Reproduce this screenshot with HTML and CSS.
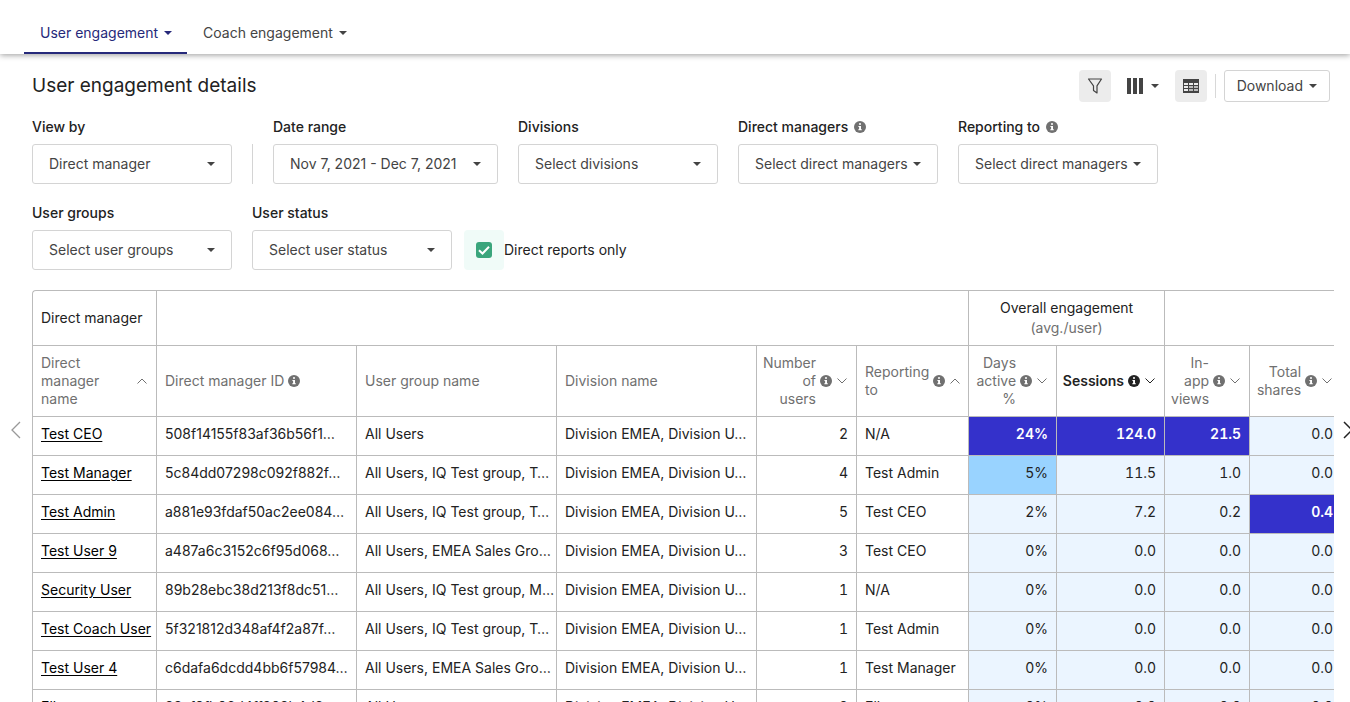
FILE: index.html
```html
<!DOCTYPE html>
<html lang="en">
<head>
<meta charset="utf-8">
<title>User engagement details</title>
<link rel="stylesheet" href="styles.css">
</head>
<body>
<svg class="defs" aria-hidden="true">
  <symbol id="caret" viewBox="0 0 8 4"><path d="M0 0h8L4 4z" fill="currentColor"/></symbol>
  <symbol id="info" viewBox="0 0 12 12"><circle cx="6" cy="6" r="6" fill="currentColor"/><path d="M5 2.2h2v1.6H5zM4.4 5H7v3.2h.8v1H4.3v-1h.8V6h-.7z" fill="#fff"/></symbol>
  <symbol id="up" viewBox="0 0 10 6"><path d="M.5 5.5 5 1l4.500 4.500" fill="none" stroke="currentColor"/></symbol>
  <symbol id="down" viewBox="0 0 10 6"><path d="M.5.5 5 5 9.500.5" fill="none" stroke="currentColor"/></symbol>
</svg>
<nav class="tabs">
  <button class="tab tab-active">User engagement <svg class="caret"><use href="#caret"/></svg></button>
  <button class="tab">Coach engagement <svg class="caret"><use href="#caret"/></svg></button>
</nav>
<main>
  <header class="title-bar">
    <h1>User engagement details</h1>
    <div class="tools">
      <button class="icon-btn icon-on" aria-label="Filters"><svg width="16" height="16" viewBox="0 0 16 16"><path d="M1.500 1h13L10 7.800V15L6.500 12.500V7.800z" fill="none" stroke="currentColor" stroke-width="1.200" stroke-linejoin="round"/></svg></button>
      <button class="icon-btn columns" aria-label="Columns"><svg width="16" height="16" viewBox="0 0 16 16"><path d="M0 0h4v16H0zM6 0h4v16H6zM12 0h4v16h-4z" fill="currentColor"/></svg><svg class="caret"><use href="#caret"/></svg></button>
      <button class="icon-btn icon-on" aria-label="Table"><svg width="16" height="14" viewBox="0 0 16 14"><path d="M0 0h16v14H0z" fill="currentColor"/><path d="M1 4h4v2H1zM6 4h4v2H6zM11 4h4v2h-4zM1 7h4v2H1zM1 10h4v2H1z" fill="#ececec"/><path d="M6 7h4v2H6zM11 7h4v2h-4zM6 10h4v2H6zM11 10h4v2h-4z" fill="#bbb"/></svg></button>
      <span class="tool-rule"></span>
      <button class="download">Download <svg class="caret"><use href="#caret"/></svg></button>
    </div>
  </header>
  <form class="filters">
    <div class="filter">
      <label for="view">View by</label>
      <div class="select"><select id="view"><option>Direct manager</option></select><svg class="caret"><use href="#caret"/></svg></div>
    </div>
    <span class="filter-rule"></span>
    <div class="filter filter-date">
      <label for="dates">Date range</label>
      <div class="select"><select id="dates"><option>Nov 7, 2021 - Dec 7, 2021</option></select><svg class="caret"><use href="#caret"/></svg></div>
    </div>
    <div class="filter">
      <label for="divisions">Divisions</label>
      <div class="select"><select id="divisions"><option>Select divisions</option></select><svg class="caret"><use href="#caret"/></svg></div>
    </div>
    <div class="filter">
      <label for="managers">Direct managers <svg class="info"><use href="#info"/></svg></label>
      <div class="select"><select id="managers"><option>Select direct managers</option></select><svg class="caret"><use href="#caret"/></svg></div>
    </div>
    <div class="filter">
      <label for="reporting">Reporting to <svg class="info"><use href="#info"/></svg></label>
      <div class="select"><select id="reporting"><option>Select direct managers</option></select><svg class="caret"><use href="#caret"/></svg></div>
    </div>
  </form>
  <form class="filters">
    <div class="filter">
      <label for="groups">User groups</label>
      <div class="select"><select id="groups"><option>Select user groups</option></select><svg class="caret"><use href="#caret"/></svg></div>
    </div>
    <div class="filter">
      <label for="status">User status</label>
      <div class="select"><select id="status"><option>Select user status</option></select><svg class="caret"><use href="#caret"/></svg></div>
    </div>
    <label class="check"><span class="check-box"><input type="checkbox" checked><svg viewBox="0 0 16 16"><path d="M3 8.200 6.500 11.500 13 4.800" fill="none" stroke="#fff" stroke-width="2"/></svg></span>Direct reports only</label>
  </form>
  <section class="report">
    <button class="pager pager-prev" aria-label="Previous columns"><svg width="10" height="18" viewBox="0 0 10 18"><path d="M9 1 1 9l8 8" fill="none" stroke="currentColor" stroke-width="1.300"/></svg></button>
    <div class="table-view">
      <table>
        <colgroup><col class="c-name"><col class="c-text"><col class="c-text"><col class="c-text"><col class="c-users"><col class="c-reporting"><col class="c-days"><col class="c-sessions"><col class="c-views"><col class="c-shares"><col class="c-sessions"></colgroup>
        <thead>
          <tr class="group-row"><th>Direct manager</th><th colspan="5"></th><th colspan="2" class="center">Overall engagement<small>(avg./user)</small></th><th colspan="3"></th></tr>
          <tr class="head-row">
            <th><div class="head head-spread">Direct manager name <svg class="sort"><use href="#up"/></svg></div></th>
            <th><div class="head">Direct manager ID <svg class="info"><use href="#info"/></svg></div></th>
            <th>User group name</th>
            <th>Division name</th>
            <th><div class="head head-num">Number of users <svg class="info"><use href="#info"/></svg><svg class="sort"><use href="#down"/></svg></div></th>
            <th><div class="head">Reporting to <svg class="info"><use href="#info"/></svg><svg class="sort"><use href="#up"/></svg></div></th>
            <th><div class="head head-num">Days active % <svg class="info"><use href="#info"/></svg><svg class="sort"><use href="#down"/></svg></div></th>
            <th class="sorted"><div class="head head-num">Sessions <svg class="info"><use href="#info"/></svg><svg class="sort"><use href="#down"/></svg></div></th>
            <th><div class="head head-num">In-app views <svg class="info"><use href="#info"/></svg><svg class="sort"><use href="#down"/></svg></div></th>
            <th><div class="head head-num">Total shares <svg class="info"><use href="#info"/></svg><svg class="sort"><use href="#down"/></svg></div></th>
            <th></th>
          </tr>
        </thead>
        <tbody>
          <tr><td><a href="#">Test CEO</a></td><td>508f14155f83af36b56f1…</td><td>All Users</td><td>Division EMEA, Division U…</td><td class="num">2</td><td>N/A</td><td class="num high">24%</td><td class="num high">124.0</td><td class="num high">21.5</td><td class="num low">0.0</td><td class="low"></td></tr>
          <tr><td><a href="#">Test Manager</a></td><td>5c84dd07298c092f882f…</td><td>All Users, IQ Test group, T…</td><td>Division EMEA, Division U…</td><td class="num">4</td><td>Test Admin</td><td class="num mid">5%</td><td class="num low">11.5</td><td class="num low">1.0</td><td class="num low">0.0</td><td class="low"></td></tr>
          <tr><td><a href="#">Test Admin</a></td><td>a881e93fdaf50ac2ee084…</td><td>All Users, IQ Test group, T…</td><td>Division EMEA, Division U…</td><td class="num">5</td><td>Test CEO</td><td class="num low">2%</td><td class="num low">7.2</td><td class="num low">0.2</td><td class="num high">0.4</td><td class="low"></td></tr>
          <tr><td><a href="#">Test User 9</a></td><td>a487a6c3152c6f95d068…</td><td>All Users, EMEA Sales Gro…</td><td>Division EMEA, Division U…</td><td class="num">3</td><td>Test CEO</td><td class="num low">0%</td><td class="num low">0.0</td><td class="num low">0.0</td><td class="num low">0.0</td><td class="low"></td></tr>
          <tr><td><a href="#">Security User</a></td><td>89b28ebc38d213f8dc51…</td><td>All Users, IQ Test group, M…</td><td>Division EMEA, Division U…</td><td class="num">1</td><td>N/A</td><td class="num low">0%</td><td class="num low">0.0</td><td class="num low">0.0</td><td class="num low">0.0</td><td class="low"></td></tr>
          <tr><td><a href="#">Test Coach User</a></td><td>5f321812d348af4f2a87f…</td><td>All Users, IQ Test group, T…</td><td>Division EMEA, Division U…</td><td class="num">1</td><td>Test Admin</td><td class="num low">0%</td><td class="num low">0.0</td><td class="num low">0.0</td><td class="num low">0.0</td><td class="low"></td></tr>
          <tr><td><a href="#">Test User 4</a></td><td>c6dafa6dcdd4bb6f57984…</td><td>All Users, EMEA Sales Gro…</td><td>Division EMEA, Division U…</td><td class="num">1</td><td>Test Manager</td><td class="num low">0%</td><td class="num low">0.0</td><td class="num low">0.0</td><td class="num low">0.0</td><td class="low"></td></tr>
          <tr><td><a href="#">Ella</a></td><td>23af9fb06d4ff202b4d8…</td><td>All Users</td><td>Division EMEA, Division U…</td><td class="num">2</td><td>Ella</td><td class="num low">0%</td><td class="num low">0.0</td><td class="num low">0.0</td><td class="num low">0.0</td><td class="low"></td></tr>
        </tbody>
      </table>
    </div>
    <button class="pager pager-next" aria-label="Next columns"><svg width="10" height="18" viewBox="0 0 10 18"><path d="m1 1 8 8-8 8" fill="none" stroke="currentColor" stroke-width="1.500"/></svg></button>
  </section>
</main>
</body>
</html>
```
FILE: styles.css
```css
* { box-sizing: border-box; }
body {
  margin: 0;
  height: 100vh;
  overflow: hidden;
  background: #fff;
  color: #222;
  font: 14px/20px Inter, "Liberation Sans", sans-serif;
}
button, select { font: inherit; color: #444; background: none; border: 0; margin: 0; }
button { display: flex; align-items: center; cursor: pointer; }
svg { flex: none; }
.defs { display: none; }
.caret { width: 8px; height: 4px; }
.info { width: 12px; height: 12px; color: #707070; }
.sort { width: 10px; height: 6px; }

.tabs {
  display: flex;
  align-items: flex-end;
  padding: 12px 24px 0;
  box-shadow: 0 1px 6px rgba(0, 0, 0, .4);
}
.tab { gap: 6px; height: 42px; padding: 2px 15px 0 16px; border-bottom: 2px solid transparent; }
.tab-active { color: #26297a; border-color: #26297a; }

main { padding: 16px 16px 0 32px; }
.title-bar { display: flex; justify-content: space-between; align-items: center; padding-right: 4px; }
h1 { margin: 0; font-size: 19px; line-height: 32px; font-weight: 400; }
.tools { display: flex; align-items: center; }
.icon-btn { justify-content: center; width: 32px; height: 32px; padding: 0; border-radius: 4px; }
.icon-on { background: #ececec; }
.columns { gap: 8px; width: 64px; }
.tool-rule { width: 1px; height: 24px; margin: 0 8px; background: #d8d8d8; }
.download { gap: 6px; height: 32px; padding: 0 12px; border: 1px solid #d4d4d4; border-radius: 3px; }

.filters { display: flex; flex-wrap: wrap; align-items: flex-end; gap: 20px; padding-top: 16px; }
.filters + .filters { padding-top: 20px; }
.filter { display: grid; gap: 8px; width: 200px; }
.filter-date { width: 225px; }
.filter label { display: flex; align-items: center; gap: 6px; line-height: 18px; font-weight: 500; }
.filter-rule { width: 1px; height: 40px; background: #d4d4d4; }
.select { display: grid; align-items: center; }
.select > * { grid-area: 1 / 1; }
.select select { appearance: none; width: 100%; height: 40px; padding: 0 16px; border: 1px solid #d4d4d4; border-radius: 3px; }
.select .caret { justify-self: end; margin-right: 17px; color: #444; pointer-events: none; }
.check { display: flex; align-items: center; margin-left: -8px; }
.check-box { display: grid; place-items: center; width: 40px; height: 40px; border-radius: 4px; background: #f0fbf8; }
.check-box > * { grid-area: 1 / 1; width: 16px; height: 16px; margin: 0; }
.check-box svg { pointer-events: none; }
.check-box input { appearance: none; border-radius: 3px; background: #3aa57c; }

.report { position: relative; margin-top: 20px; }
.table-view { overflow: hidden; border-top: 1px solid #bbb; border-left: 1px solid #bbb; border-top-left-radius: 4px; }
table { table-layout: fixed; width: 1417px; border-collapse: separate; border-spacing: 0; }
.c-name { width: 124px; }
.c-text { width: 200px; }
.c-users { width: 100px; }
.c-reporting { width: 112px; }
.c-days { width: 88px; }
.c-sessions { width: 108px; }
.c-views { width: 85px; }
.c-shares { width: 92px; }
th, td { border-right: 1px solid #bbb; border-bottom: 1px solid #bbb; text-align: left; }
th { padding: 8px; font-weight: 400; line-height: 18px; }
.group-row th { height: 55px; padding: 0 8px; }
.group-row .center { text-align: center; line-height: 20px; }
small { display: block; font-size: inherit; color: #707070; }
.head-row th { color: #707070; }
.head-row .sorted { color: #222; font-weight: 600; }
.sorted .info { color: inherit; }
.head { display: flex; align-items: center; gap: 4px; }
.head .sort { margin: 0 1px; }
.head-spread { justify-content: space-between; }
.head-num { justify-content: flex-end; text-align: right; }
td { padding: 8px 8px 12px; line-height: 18px; white-space: nowrap; }
td a { color: #000; text-underline-offset: 2px; }
.num { text-align: right; font-variant-numeric: tabular-nums; }
.low { background: #ebf5ff; }
.mid { background: #99d3ff; }
.high { background: #3431cb; color: #fff; font-weight: 600; }

.pager { position: absolute; top: 131px; padding: 0; color: #999; }
.pager-prev { left: -21px; }
.pager-next { right: -19px; color: #222; }
```
